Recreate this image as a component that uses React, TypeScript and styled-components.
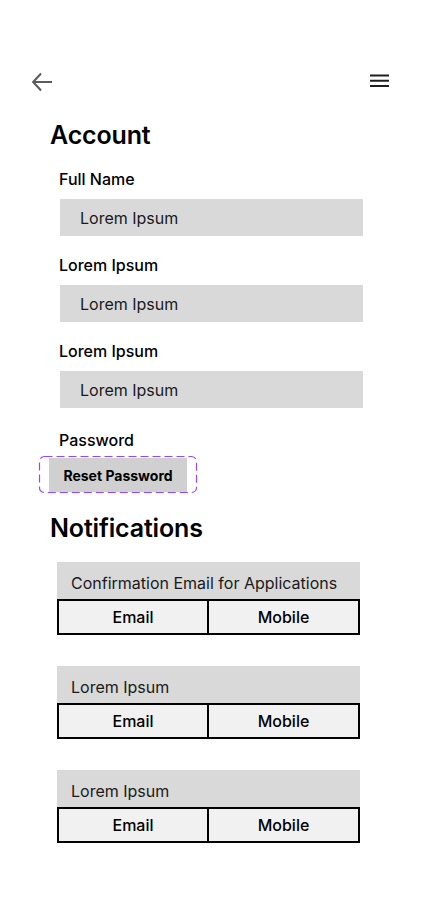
import React from "react";
import styled, { createGlobalStyle } from "styled-components";

const GlobalStyle = createGlobalStyle`
  * { box-sizing: border-box; }
  body {
    margin: 0;
    background: #ffffff;
    font-family: Inter, "Noto Sans", sans-serif;
    color: #000000;
  }
`;

const Page = styled.div`
  width: 423px;
  min-height: 915px;
  padding-top: 72px;
  background: #ffffff;
`;

const TopBar = styled.header`
  display: flex;
  justify-content: space-between;
  align-items: center;
  height: 20px;
  padding: 0 34px 0 32px;
`;

const IconButton = styled.button`
  display: flex;
  padding: 0;
  border: none;
  background: none;
  width: 20px;
  height: 20px;
  cursor: pointer;
`;

const Content = styled.main`
  padding-left: 50px;
`;

const SectionTitle = styled.h2<{ $top: number }>`
  margin: ${(p) => p.$top}px 0 0;
  font-size: 25px;
  line-height: 30px;
  font-weight: 600;
  letter-spacing: -0.15px;
`;

const Fields = styled.div`
  display: flex;
  flex-direction: column;
  gap: 19px;
  margin-top: 19px;
  padding-left: 9px;
`;

const Field = styled.div`
  display: flex;
  flex-direction: column;
  gap: 10px;
`;

const Label = styled.label`
  font-size: 16px;
  line-height: 20px;
  font-weight: 500;
`;

const InputBox = styled.div`
  width: 303px;
  height: 37px;
  margin-left: 1px;
  padding-left: 20px;
  display: flex;
  align-items: center;
  background: #d9d9d9;
  font-size: 16px;
  font-weight: 400;
  color: #1a1a1a;
`;

const PasswordField = styled.div`
  display: flex;
  flex-direction: column;
  gap: 6px;
  margin-top: 3px;
`;

const DashedFrame = styled.div`
  position: relative;
  align-self: flex-start;
  margin-left: -20px;
  padding: 2px 10px 1px;
`;

const DashOutline = styled.svg`
  position: absolute;
  inset: 0;
  width: 100%;
  height: 100%;
  overflow: visible;
  pointer-events: none;
`;

const ResetButton = styled.button`
  display: block;
  width: 138px;
  height: 34px;
  border: none;
  background: #d0d0d0;
  font-family: Inter, "Noto Sans", sans-serif;
  font-size: 14px;
  font-weight: 700;
  color: #000000;
  padding: 0;
`;

const Cards = styled.div`
  display: flex;
  flex-direction: column;
  gap: 31px;
  margin-top: 19px;
  padding-left: 7px;
`;

const Card = styled.section`
  width: 303px;
`;

const CardHeader = styled.div`
  height: 37px;
  padding: 11px 0 0 14px;
  background: #d9d9d9;
  font-size: 16px;
  line-height: 20px;
  font-weight: 400;
  color: #1a1a1a;
`;

const Toggle = styled.div`
  display: grid;
  grid-template-columns: 148px 1fr;
  height: 36px;
  border: 2px solid #000000;
`;

const ToggleOption = styled.button<{ $divider?: boolean }>`
  border: none;
  border-left: ${(p) => (p.$divider ? "2px solid #000000" : "none")};
  background: #f1f1f1;
  padding: 0;
  font-family: Inter, "Noto Sans", sans-serif;
  font-size: 16px;
  font-weight: 500;
  color: #000000;
`;

const BackIcon = () => (
  <svg width="20" height="20" viewBox="0 0 20 20" fill="none">
    <path
      d="M9 1.5 L1.2 10 L9 18.5 M1.5 10 H20"
      stroke="#5b5b5b"
      strokeWidth="2"
      strokeLinecap="butt"
      strokeLinejoin="miter"
    />
  </svg>
);

const MenuIcon = () => (
  <svg width="20" height="20" viewBox="0 0 20 20" fill="none">
    <path d="M1 3.5 H20 M1 8.7 H20 M1 14 H20" stroke="#1e1e1e" strokeWidth="2" />
  </svg>
);

const fields = [
  { label: "Full Name", value: "Lorem Ipsum" },
  { label: "Lorem Ipsum", value: "Lorem Ipsum" },
  { label: "Lorem Ipsum", value: "Lorem Ipsum" },
];

const notifications = [
  "Confirmation Email for Applications",
  "Lorem Ipsum",
  "Lorem Ipsum",
];

export default function App() {
  return (
    <>
      <GlobalStyle />
      <Page>
        <TopBar>
          <IconButton aria-label="Back">
            <BackIcon />
          </IconButton>
          <IconButton aria-label="Menu">
            <MenuIcon />
          </IconButton>
        </TopBar>
        <Content>
          <SectionTitle $top={28}>Account</SectionTitle>
          <Fields>
            {fields.map((f, i) => (
              <Field key={i}>
                <Label>{f.label}</Label>
                <InputBox>{f.value}</InputBox>
              </Field>
            ))}
            <PasswordField>
              <Label>Password</Label>
              <DashedFrame>
                <DashOutline aria-hidden="true">
                  <rect
                    x="0.5"
                    y="0.5"
                    width="calc(100% - 1px)"
                    height="calc(100% - 1px)"
                    rx="5"
                    fill="none"
                    stroke="#9747ff"
                    strokeWidth="1.2"
                    strokeDasharray="8 4"
                  />
                </DashOutline>
                <ResetButton>Reset Password</ResetButton>
              </DashedFrame>
            </PasswordField>
          </Fields>
          <SectionTitle $top={20}>Notifications</SectionTitle>
          <Cards>
            {notifications.map((n, i) => (
              <Card key={i}>
                <CardHeader>{n}</CardHeader>
                <Toggle>
                  <ToggleOption>Email</ToggleOption>
                  <ToggleOption $divider>Mobile</ToggleOption>
                </Toggle>
              </Card>
            ))}
          </Cards>
        </Content>
      </Page>
    </>
  );
}
